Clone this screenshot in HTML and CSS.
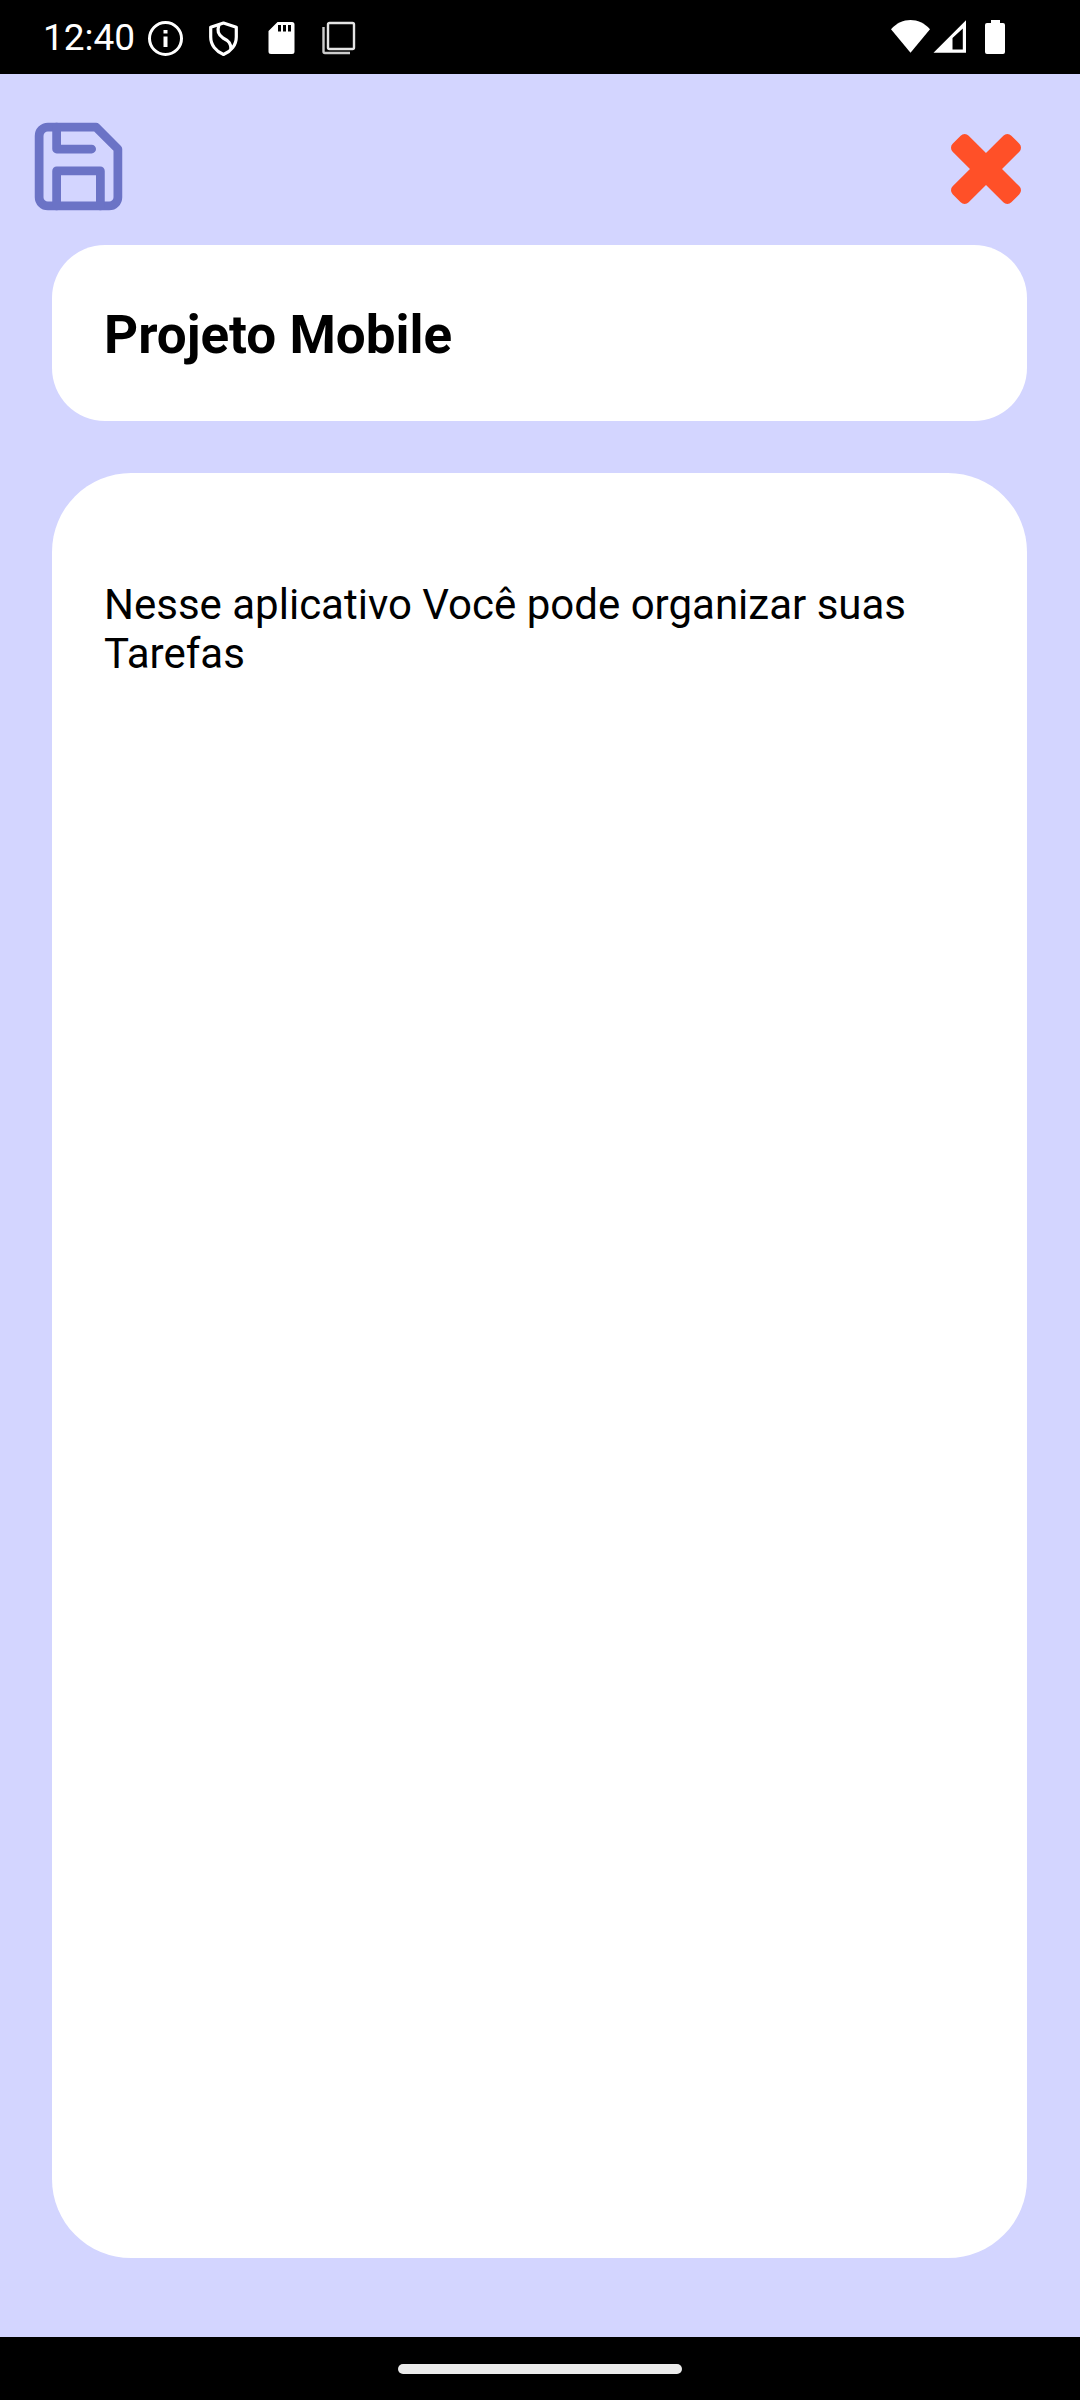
FILE: index.html
```html
<!DOCTYPE html>
<html lang="pt-BR">
<head>
<meta charset="utf-8">
<meta name="viewport" content="width=device-width, initial-scale=1">
<title>Projeto Mobile</title>
<link rel="stylesheet" href="styles.css">
</head>
<body>
<header class="status-bar">
  <time class="clock">12:40</time>
  <div class="notifications">
    <svg class="notification-icon" viewBox="0 0 36 36" aria-hidden="true">
      <circle cx="17.5" cy="17.5" r="16" fill="none" stroke="#fff" stroke-width="3"/>
      <path fill="#fff" d="M15.5 9h4v3.500h-4zM15.500 15.500h4V26h-4z"/>
    </svg>
    <svg class="notification-icon" viewBox="0 0 36 36" aria-hidden="true">
      <path fill="none" stroke="#fff" stroke-width="3.200" stroke-linejoin="round" d="M17.500 2 4.700 6.200V16C4.700 24 10 30.500 17.500 33.500 25 30.500 30.300 24 30.300 16V6.200Z"/>
      <path fill="none" stroke="#fff" stroke-width="3.200" d="M13 3.500C11 10 12 13.500 17 17 23 20 25 22.500 25 28.500"/>
    </svg>
    <svg class="notification-icon" viewBox="0 0 36 36" aria-hidden="true">
      <path fill="#fff" fill-rule="evenodd" d="M13.500 1H28a2.500 2.500 0 0 1 2.500 2.500V30.500A2.500 2.500 0 0 1 28 33H7a2.500 2.500 0 0 1-2.500-2.500V10ZM14 4v6.500h3V4ZM19 4v6.500h3V4ZM24 4v6.500h3V4Z"/>
    </svg>
    <svg class="notification-icon" viewBox="0 0 36 36" aria-hidden="true">
      <rect x="6" y="2" width="26" height="26" rx="1.500" fill="none" stroke="#e4e4e4" stroke-width="2.400"/>
      <path fill="none" stroke="#ccc" stroke-width="2.400" d="M1.500 6V30.500A1.500 1.500 0 0 0 3 32H28"/>
    </svg>
  </div>
  <div class="system">
    <svg class="system-icon" viewBox="0 0 42 36" aria-hidden="true">
      <path fill="#fff" d="M2 9.200C13-3 30-3 41 9.200L21.500 32.800Z"/>
    </svg>
    <svg class="system-icon" viewBox="0 0 42 36" aria-hidden="true">
      <path fill="#fff" fill-rule="evenodd" d="M2.500 32.800 35 .3V32.800ZM21.500 18V29.500H31.800V8.500Z"/>
    </svg>
    <svg class="system-icon" viewBox="0 0 42 36" aria-hidden="true">
      <path fill="#fff" d="M18 0h9v3h3a2 2 0 0 1 2 2V32a2 2 0 0 1-2 2H14a2 2 0 0 1-2-2V5a2 2 0 0 1 2-2h4Z"/>
    </svg>
  </div>
</header>

<form class="editor">
  <div class="toolbar">
    <button class="tool" type="submit" aria-label="Salvar">
      <svg class="save-icon" viewBox="0 0 24 24" aria-hidden="true">
        <path d="M19 21H5a2 2 0 0 1-2-2V5a2 2 0 0 1 2-2h11l5 5v11a2 2 0 0 1-2 2z"/>
        <path d="M17 21v-8H7v8M7 3v5h8"/>
      </svg>
    </button>
    <button class="tool" type="button" aria-label="Fechar">
      <svg class="close-icon" viewBox="302 366 1188 1188" aria-hidden="true">
        <path d="M1490 1322q0 40-28 68l-136 136q-28 28-68 28t-68-28l-294-294-294 294q-28 28-68 28t-68-28l-136-136q-28-28-28-68t28-68l294-294-294-294q-28-28-28-68t28-68l136-136q28-28 68-28t68 28l294 294 294-294q28-28 68-28t68 28l136 136q28 28 28 68t-28 68l-294 294 294 294q28 28 28 68z"/>
      </svg>
    </button>
  </div>
  <input class="field title-field" type="text" aria-label="Título" value="Projeto Mobile">
  <textarea class="field note-field" aria-label="Nota" spellcheck="false">Nesse aplicativo Você pode organizar suas Tarefas</textarea>
</form>

<footer class="nav-bar"><span class="home-handle"></span></footer>
</body>
</html>
```
FILE: styles.css
```css
* {
  box-sizing: border-box;
}

body {
  margin: 0;
  min-height: 100vh;
  display: flex;
  flex-direction: column;
  background: #d3d5ff;
  color: #000;
  font-family: Roboto, "Liberation Sans", sans-serif;
}

.status-bar {
  display: flex;
  align-items: center;
  gap: 13px;
  height: 74px;
  padding: 0 65px 0 43px;
  background: #000;
  color: #fff;
}

.clock {
  padding-top: 1px;
  font-size: 37px;
  line-height: 44px;
}

.notifications {
  display: flex;
  gap: 22px;
  padding-top: 4px;
}

.notification-icon {
  display: block;
  width: 36px;
  height: 36px;
}

.system {
  display: flex;
  margin-left: auto;
  padding-top: 2px;
}

.system-icon {
  display: block;
  width: 42px;
  height: 36px;
}

.editor {
  flex: 1;
  display: flex;
  flex-direction: column;
  padding: 40px 53px 79px 52px;
}

.toolbar {
  display: flex;
  justify-content: space-between;
  align-items: center;
  height: 105px;
  margin: 0 -26px 26px;
}

.tool {
  display: flex;
  align-items: center;
  justify-content: center;
  padding: 0;
  border: 0;
  background: none;
}

.save-icon {
  width: 105px;
  height: 105px;
  fill: none;
  stroke: #6b73c6;
  stroke-width: 2;
  stroke-linecap: round;
  stroke-linejoin: round;
}

.close-icon {
  width: 70px;
  height: 70px;
  margin: 4px 32px 0;
  fill: #ff5028;
}

.field {
  display: block;
  width: 100%;
  border: 0;
  outline: 0;
  background: #fff;
  color: inherit;
  font-family: inherit;
}

.title-field {
  height: 176px;
  margin-bottom: 52px;
  padding: 4px 52px 0;
  border-radius: 53px;
  font-size: 53px;
  font-weight: 700;
}

.note-field {
  flex: 1;
  padding: 107px 52px 52px;
  border-radius: 79px;
  font-size: 42px;
  line-height: 49px;
  resize: none;
}

.nav-bar {
  display: flex;
  align-items: center;
  justify-content: center;
  height: 63px;
  background: #000;
}

.home-handle {
  width: 284px;
  height: 10px;
  border-radius: 5px;
  background: #ebebeb;
}
```
